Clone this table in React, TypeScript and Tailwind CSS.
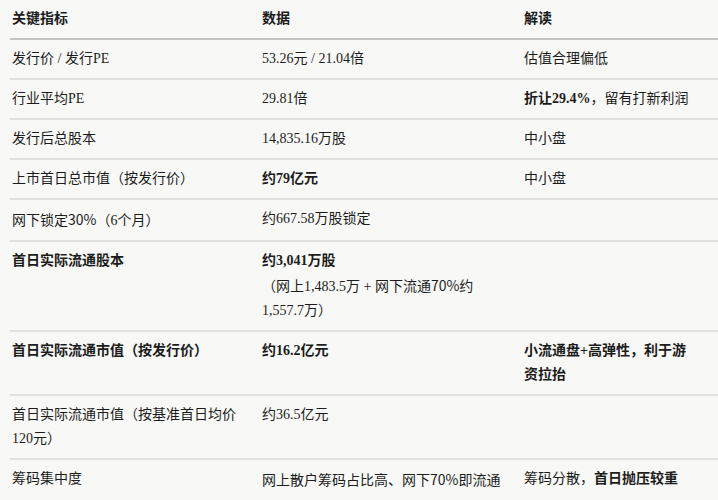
import React from "react";

type Cell = React.ReactNode;

const S = ({ children }: { children: React.ReactNode }) => (
  <span className="font-['Noto_Sans_CJK_SC',sans-serif]">{children}</span>
);

const rows: [Cell, Cell, Cell][] = [
  ["发行价 / 发行PE", "53.26元 / 21.04倍", "估值合理偏低"],
  ["行业平均PE", "29.81倍", <><b className="font-bold">折让29.4%</b>，留有打新利润</>],
  ["发行后总股本", "14,835.16万股", "中小盘"],
  ["上市首日总市值（按发行价）", <b className="font-bold">约79亿元</b>, "中小盘"],
  [<>网下锁定<S>30%</S>（6个月）</>, "约667.58万股锁定", ""],
  [
    <b className="font-bold">首日实际流通股本</b>,
    <>
      <b className="font-bold">约3,041万股</b>
      <br />
      （网上1,483.5万 + 网下流通<S>70%</S>约 1,557.7万）
    </>,
    "",
  ],
  [
    <b className="font-bold">首日实际流通市值（按发行价）</b>,
    <b className="font-bold">约16.2亿元</b>,
    <b className="font-bold">小流通盘+高弹性，利于游资拉抬</b>,
  ],
  ["首日实际流通市值（按基准首日均价120元）", "约36.5亿元", ""],
  [
    "筹码集中度",
    <>网上散户筹码占比高、网下<S>70%</S>即流通</>,
    <>筹码分散，<b className="font-bold">首日抛压较重</b></>,
  ],
];

export default function App() {
  return (
    <div className="w-[718px] h-[500px] overflow-hidden bg-[#f8f8f6] text-[#1c1c1c] font-['Liberation_Serif','Noto_Sans_CJK_SC',serif] text-[14px] leading-[24px]">
      <div className="ml-[10px] grid grid-cols-[250px_262px_196px]">
        {["关键指标", "数据", "解读"].map((h) => (
          <div key={h} className="pl-[2px] pr-[10px] py-[7px] font-bold border-b-2 border-[#c4c4c2]">
            {h}
          </div>
        ))}
        {rows.map((r, i) =>
          r.map((c, j) => (
            <div
              key={`${i}-${j}`}
              className={`pl-[2px] py-[7px] border-b-2 border-[#e0e0de] ${j === 2 ? "pr-[22px]" : "pr-[10px]"}`}
            >
              {c}
            </div>
          ))
        )}
      </div>
    </div>
  );
}
